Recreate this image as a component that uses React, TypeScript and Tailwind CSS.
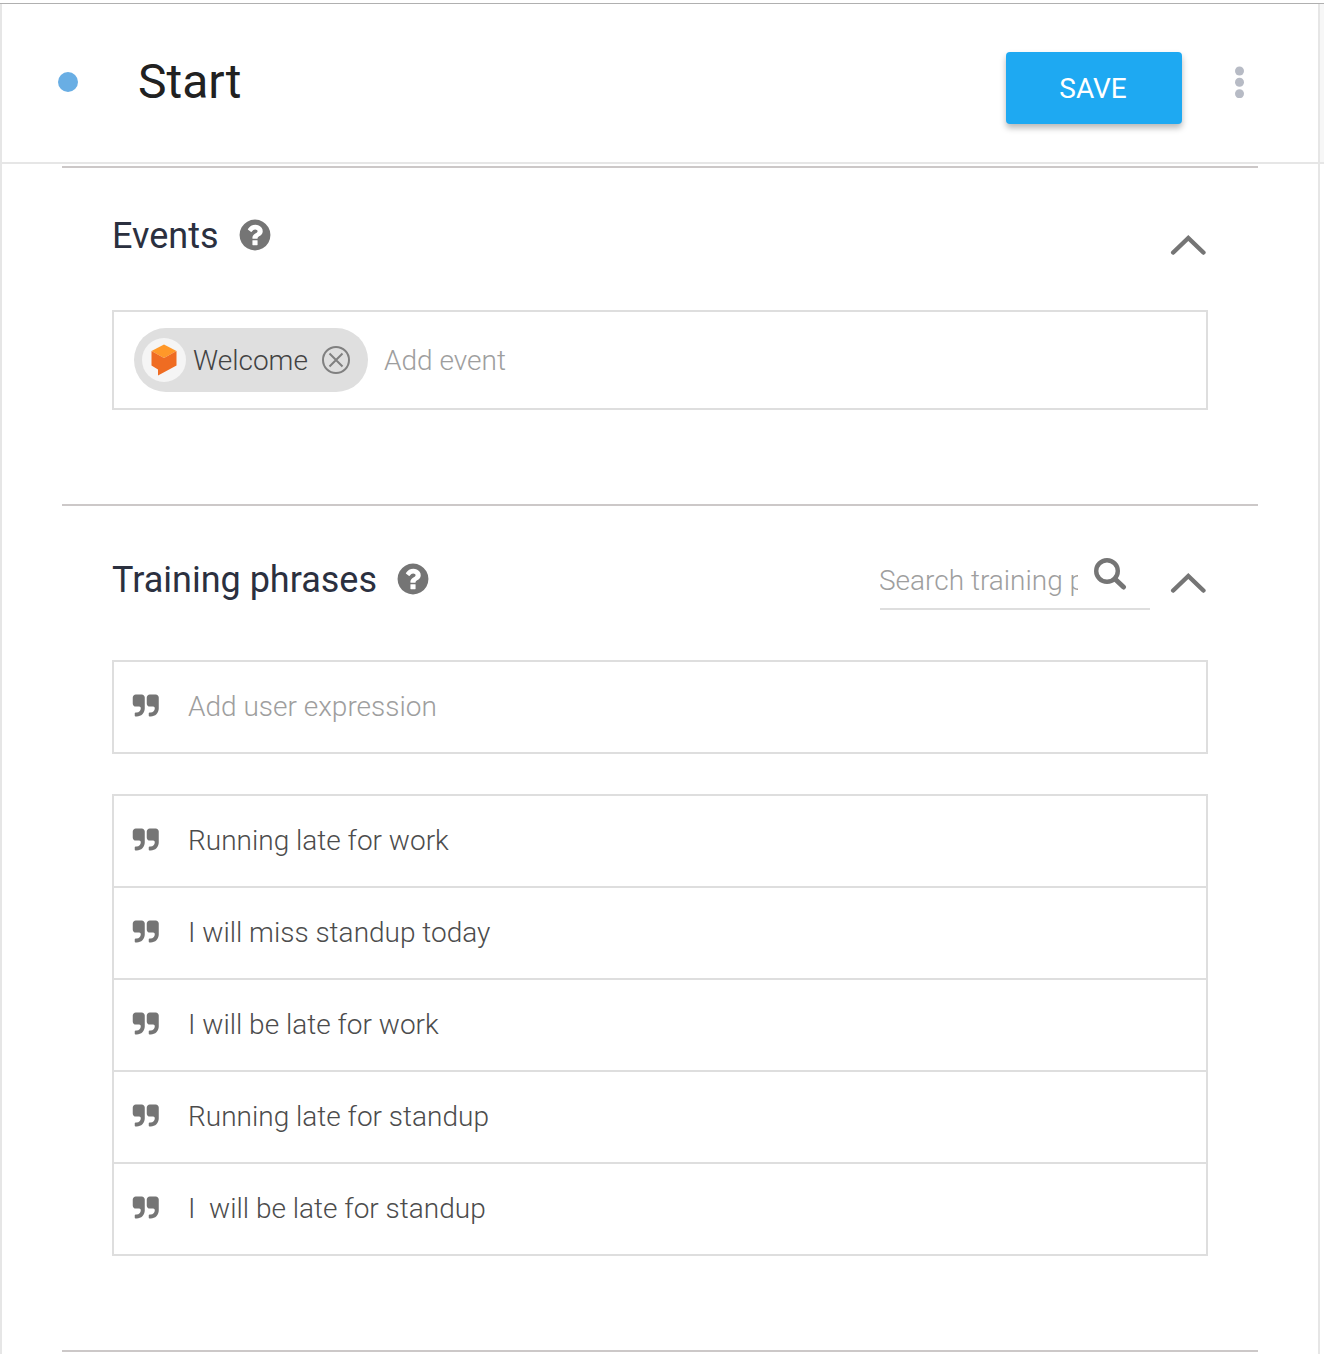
import React from 'react';

function HelpIcon() {
  return (
    <svg className="size-9 fill-[#757575]" viewBox="0 0 1792 1792">
      <path d="M1024 1376v-192q0-14-9-23t-23-9h-192q-14 0-23 9t-9 23v192q0 14 9 23t23 9h192q14 0 23-9t9-23zm256-672q0-88-55.5-163t-138.5-116-170-41q-243 0-371 213-15 24 8 42l132 100q7 6 19 6 16 0 25-12 53-68 86-92 34-24 86-24 48 0 85.5 26t37.5 59q0 38-20 61t-68 45q-63 28-115.5 86.5t-52.5 125.5v36q0 14 9 23t23 9h192q14 0 23-9t9-23q0-19 21.5-49.5t54.5-49.5q32-18 49-28.5t46-35 44.5-48 28-60.5 12.5-81zm384 192q0 209-103 385.5t-279.5 279.5-385.5 103-385.5-103-279.5-279.5-103-385.5 103-385.5 279.5-279.5 385.5-103 385.5 103 279.5 279.5 103 385.5z" />
    </svg>
  );
}

function QuoteIcon() {
  return (
    <svg className="mb-[3px] h-[23px] w-7 shrink-0 fill-[#757575]" viewBox="32 96 1760 1472">
      <path d="M832 320v704q0 104-40.5 198.5t-109.5 163.5-163.5 109.5-198.500 40.500h-64q-26 0-45-19t-19-45v-128q0-26 19-45t45-19h64q106 0 181-75t75-181v-32q0-40-28-68t-68-28h-224q-80 0-136-56t-56-136v-384q0-80 56-136t136-56h384q80 0 136 56t56 136zm896 0v704q0 104-40.500 198.500t-109.500 163.500-163.500 109.500-198.500 40.500h-64q-26 0-45-19t-19-45v-128q0-26 19-45t45-19h64q106 0 181-75t75-181v-32q0-40-28-68t-68-28h-224q-80 0-136-56t-56-136v-384q0-80 56-136t136-56h384q80 0 136 56t56 136z" />
    </svg>
  );
}

function Chevron() {
  return (
    <svg className="h-[22px] w-9 fill-none stroke-[#757575] stroke-[4.500]" viewBox="0 0 36 22">
      <path d="M3.200 18.500L18.300 4L33.400 18.500" strokeLinecap="round" />
    </svg>
  );
}

function SearchIcon() {
  return (
    <svg className="h-[34px] w-[34px] fill-none stroke-[#757575]" viewBox="0 0 34 34">
      <circle cx="14" cy="14" r="10.800" strokeWidth="4.400" />
      <path d="M22 22L30.500 30" strokeWidth="5" strokeLinecap="round" />
    </svg>
  );
}

function Logo() {
  return (
    <svg className="h-8 w-[26px]" viewBox="0 0 26 32">
      <path d="M13 0.500L25.500 7L13 14L.5 7z" fill="#ff9829" />
      <path d="M.5 7L13 14L25.500 7V21.500L7 31.500V25.500L.5 21.500z" fill="#ef6c22" />
    </svg>
  );
}

const phrases = [
  'Running late for work',
  'I will miss standup today',
  'I will be late for work',
  'Running late for standup',
  'I  will be late for standup',
];

export default function App() {
  return (
    <div className="h-[1362px] w-[1324px] overflow-hidden bg-white pt-[3px] font-['Roboto',sans-serif] text-[28px] leading-8 font-light text-[#4c4c4c]">
      <div className="h-px bg-[#b0b0b0]" />
      <div className="flex h-[1350px]">
        <main className="w-[1320px] border-x-2 border-[#e6e6e6]">
          <header className="flex h-40 items-start border-b-2 border-[#e6e6e6] pl-14">
            <span className="mt-[68px] size-5 rounded-full bg-[#69aee4]" />
            <h1 className="mt-[50px] ml-[60px] grow text-[48px] leading-[56px] font-normal text-[#212121]">Start</h1>
            <button className="mt-12 h-[72px] w-44 rounded-[4px] bg-[#1ea9f2] pt-0.5 pr-0.5 font-normal text-white shadow-[0_4px_6px_rgba(0,0,0,0.28)]">
              SAVE
            </button>
            <svg className="mt-[62px] mr-[73px] ml-[52px] h-8 w-[11px] fill-[#b7bbc5]" viewBox="0 0 11 32">
              <circle cx="5.500" cy="5" r="4.500" />
              <circle cx="5.500" cy="16.300" r="4.500" />
              <circle cx="5.500" cy="27.700" r="4.500" />
            </svg>
          </header>

          <section className="mx-[60px] mt-0.5 h-[338px] border-t-2 border-[#ccc8c8] px-[50px]">
            <div className="flex h-[142px] items-start">
              <h2 className="mt-[47px] text-[36px] leading-[42px] font-normal text-[#2b303f]">Events</h2>
              <div className="mt-[49px] ml-[18px] grow">
                <HelpIcon />
              </div>
              <div className="mt-[66px] mr-0.5">
                <Chevron />
              </div>
            </div>
            <div className="flex h-[100px] items-center border-2 border-[#dedede] pl-5">
              <div className="flex h-16 w-[234px] items-center rounded-full bg-[#dfdfdf] pl-2">
                <div className="flex size-11 items-center justify-center rounded-full bg-[#f5f5f5]">
                  <Logo />
                </div>
                <span className="ml-[7px] grow pt-0.5 text-[#424242]">Welcome</span>
                <svg className="mr-[17px] size-[30px] fill-none stroke-[#808080] stroke-2" viewBox="0 0 30 30">
                  <circle cx="15" cy="15" r="13" />
                  <path d="M8.500 8.500L21.500 21.500M21.500 8.500L8.500 21.500" />
                </svg>
              </div>
              <span className="ml-4 pt-0.5 text-[#9e9e9e]">Add event</span>
            </div>
          </section>

          <section className="mx-[60px] border-t-2 border-[#ccc8c8] px-[50px]">
            <div className="flex h-[154px] items-start">
              <h2 className="mt-[53px] text-[36px] leading-[42px] font-normal text-[#2b303f]">Training phrases</h2>
              <div className="mt-[55px] ml-[18px] grow">
                <HelpIcon />
              </div>
              <div className="mt-[50px] flex h-[54px] w-[270px] border-b-2 border-[#dedede]">
                <span className="mt-[9px] w-[198px] overflow-hidden whitespace-nowrap -indent-px text-[#9e9e9e]">
                  Search training phrases
                </span>
                <div className="mt-px ml-[15px]">
                  <SearchIcon />
                </div>
              </div>
              <div className="mt-[66px] mr-0.5 ml-5">
                <Chevron />
              </div>
            </div>
            <div className="flex h-[94px] items-center border-2 border-[#dedede] pl-[18px]">
              <QuoteIcon />
              <span className="ml-7 text-[#9e9e9e]">Add user expression</span>
            </div>
            <ul className="mt-10 border-2 border-b-0 border-[#dedede]">
              {phrases.map((phrase) => (
                <li key={phrase} className="flex h-[92px] items-center border-b-2 border-[#dedede] pl-[18px]">
                  <QuoteIcon />
                  <span className="ml-7 whitespace-pre">{phrase}</span>
                </li>
              ))}
            </ul>
          </section>
          <div className="mx-[60px] mt-[94px] h-0.5 bg-[#ccc8c8]" />
        </main>
        <aside className="h-40 w-1 border-b-2 border-[#e6e6e6] bg-[#f7f7f7]" />
      </div>
    </div>
  );
}
